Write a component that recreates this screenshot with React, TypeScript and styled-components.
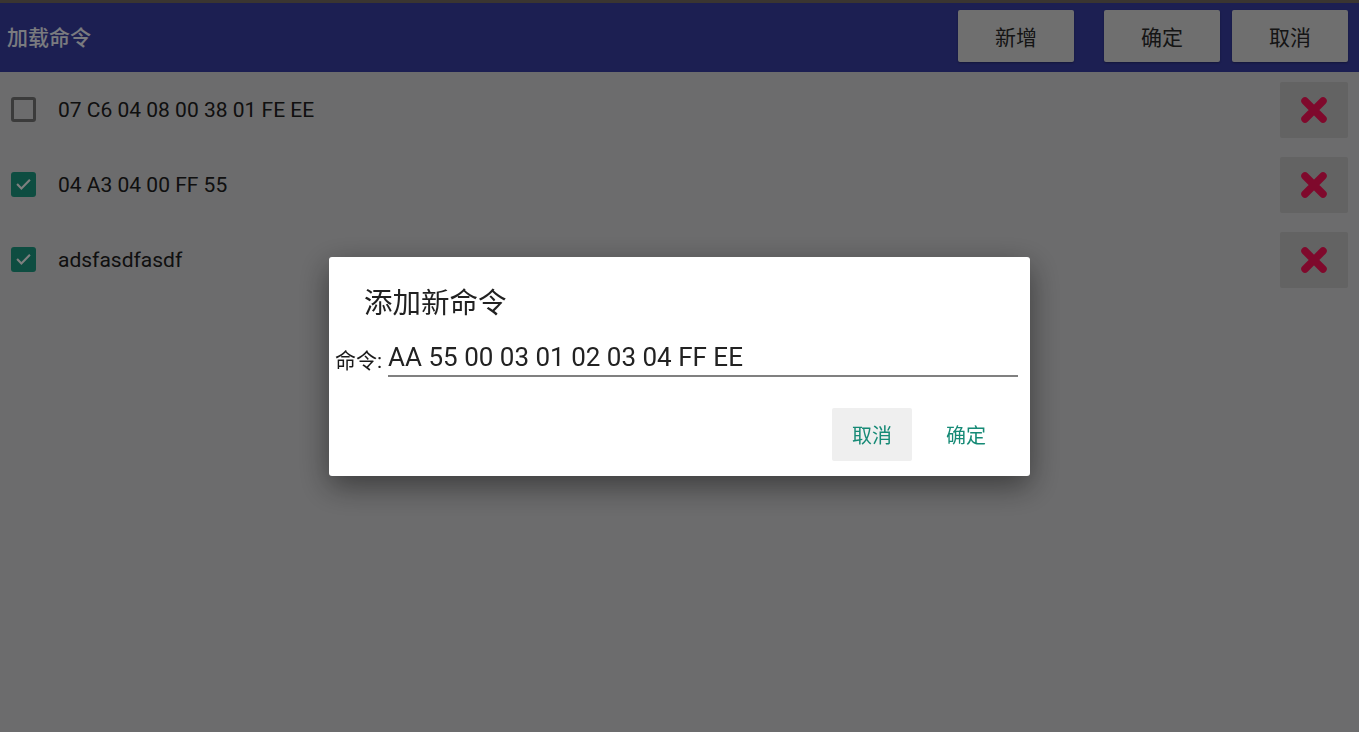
import styled, {createGlobalStyle} from "styled-components";

const GlobalStyle = createGlobalStyle`
  html, body {
    margin: 0;
    padding: 0;
    height: 100%;
    overflow: hidden;
  }
  body {
    font-family: Roboto, "Noto Sans CJK SC", sans-serif;
  }
`

const commands = [
  {text: '07 C6 04 08 00 38 01 FE EE', checked: false},
  {text: '04 A3 04 00 FF 55', checked: true},
  {text: 'adsfasdfasdf', checked: true},
];

const CheckIcon = () => (
  <svg width="17" height="17" viewBox="0 0 24 24" fill="none">
    <path d="M4 12.5l5 5L20 6.5" stroke="#ffffff" strokeWidth="3" strokeLinecap="square"/>
  </svg>
);

const CrossIcon = () => (
  <svg width="30" height="30" viewBox="0 0 30 30">
    <path d="M6 6L24 24M24 6L6 24" stroke="#ff1258" strokeWidth="7.5" strokeLinecap="round"/>
  </svg>
);

const App = () => {
  return (
    <Page>
      <GlobalStyle/>
      <StatusStrip/>
      <Header>
        <Title>加载命令</Title>
        <Actions>
          <HeaderButton>新增</HeaderButton>
          <HeaderButton $gapLeft={30}>确定</HeaderButton>
          <HeaderButton $gapLeft={12}>取消</HeaderButton>
        </Actions>
      </Header>

      <List>
        {commands.map((c) => (
          <Row key={c.text}>
            <Check $checked={c.checked}>{c.checked && <CheckIcon/>}</Check>
            <RowText>{c.text}</RowText>
            <DeleteButton><CrossIcon/></DeleteButton>
          </Row>
        ))}
      </List>

      <Overlay>
        <Dialog>
          <DialogTitle>添加新命令</DialogTitle>
          <InputRow>
            <Label>命令:</Label>
            <Input defaultValue="AA 55 00 03 01 02 03 04 FF EE"/>
          </InputRow>
          <DialogActions>
            <TextButton $pressed>取消</TextButton>
            <TextButton>确定</TextButton>
          </DialogActions>
        </Dialog>
      </Overlay>
    </Page>
  );
};

const Page = styled.div`
  position: relative;
  width: 100vw;
  height: 100vh;
  background: #d8d8da;
  display: flex;
  flex-direction: column;
`

const StatusStrip = styled.div`
  height: 3px;
  background: #746a62;
`

const Header = styled.header`
  height: 69px;
  background: #383ea4;
  display: flex;
  align-items: flex-start;
  justify-content: space-between;
  padding: 7px 11px 0 7px;
  box-sizing: border-box;
`

const Title = styled.h1`
  margin: 0;
  font-size: 21px;
  font-weight: 500;
  line-height: 56px;
  color: #f4f6ff;
`

const Actions = styled.div`
  display: flex;
`

const HeaderButton = styled.button<{ $gapLeft?: number }>`
  width: 116px;
  height: 52px;
  margin-left: ${p => p.$gapLeft ?? 0}px;
  border: none;
  border-radius: 2px;
  background: #dfdfdf;
  color: #2a2a2a;
  font-family: inherit;
  font-size: 21px;
  box-shadow: 0 1px 2px rgba(0, 0, 0, 0.3);
`

const List = styled.div`
  display: flex;
  flex-direction: column;
`

const Row = styled.div`
  height: 75px;
  display: flex;
  align-items: center;
  padding: 0 11px;
`

const Check = styled.span<{ $checked: boolean }>`
  width: 25px;
  height: 25px;
  box-sizing: border-box;
  border-radius: 3px;
  display: flex;
  align-items: center;
  justify-content: center;
  background: ${p => p.$checked ? '#1c9a82' : 'transparent'};
  border: ${p => p.$checked ? 'none' : '3px solid #767676'};
`

const RowText = styled.span`
  flex: 1;
  margin-left: 22px;
  font-size: 21px;
  color: #202020;
`

const DeleteButton = styled.button`
  width: 68px;
  height: 56px;
  border: none;
  border-radius: 2px;
  background: #c6c6c6;
  display: flex;
  align-items: center;
  justify-content: center;
  padding: 0;
`

const Overlay = styled.div`
  position: fixed;
  inset: 0;
  background: rgba(0, 0, 0, 0.5);
  display: flex;
  align-items: center;
  justify-content: center;
`

const Dialog = styled.div`
  width: 701px;
  height: 219px;
  box-sizing: border-box;
  background: #ffffff;
  border-radius: 3px;
  box-shadow: 0 10px 30px rgba(0, 0, 0, 0.45);
  padding: 26px 12px 15px 6px;
  display: flex;
  flex-direction: column;
`

const DialogTitle = styled.h2`
  margin: 0 0 0 29px;
  font-size: 28.5px;
  font-weight: 400;
  line-height: 42px;
  color: #212121;
`

const InputRow = styled.div`
  margin-top: 17px;
  display: flex;
  align-items: center;
`

const Label = styled.span`
  font-size: 21px;
  color: #1a1a1a;
  margin-right: 6px;
`

const Input = styled.input`
  flex: 1;
  min-width: 0;
  border: none;
  border-bottom: 2px solid #808080;
  outline: none;
  padding: 0 0 3px;
  font-family: inherit;
  font-size: 26px;
  color: #222222;
  background: transparent;
`

const DialogActions = styled.div`
  margin-top: auto;
  margin-right: 12px;
  display: flex;
  justify-content: flex-end;
  gap: 14px;
`

const TextButton = styled.button<{ $pressed?: boolean }>`
  width: 80px;
  height: 53px;
  border: none;
  border-radius: 2px;
  background: ${p => p.$pressed ? '#efefef' : 'transparent'};
  color: #168a76;
  font-family: inherit;
  font-size: 20px;
`

export default App;
